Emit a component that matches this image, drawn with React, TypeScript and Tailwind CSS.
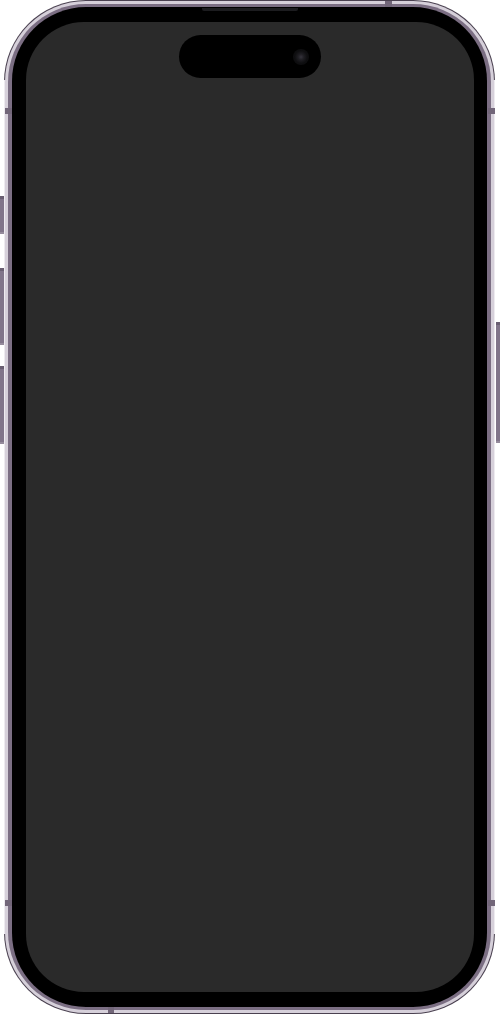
function SideButton({ className }: { className: string }) {
  return (
    <div className={`flex w-full flex-col justify-between bg-[#81758a] ${className}`}>
      <div className="h-[3px] bg-[#6a5f72]" />
      <div className="h-[2px] bg-[#958b9c]" />
    </div>
  );
}

function Band({ className }: { className: string }) {
  return <div className={`absolute bg-[#726679] ${className}`} />;
}

export default function App() {
  return (
    <div className="relative flex h-[1014px] w-[500px] overflow-hidden bg-white">
      {/* volume + mute buttons */}
      <div className="flex w-[4px] shrink-0 flex-col pt-[196px]">
        <SideButton className="h-[38px]" />
        <SideButton className="mt-[34px] h-[77px]" />
        <SideButton className="mt-[21px] h-[78px]" />
      </div>

      {/* phone body */}
      <div className="h-full w-[491px] shrink-0 rounded-[82px] bg-[linear-gradient(to_bottom,#4a4150_80px,#eeebf0_80px,#eeebf0_934px,#4a4150_934px)] p-[1px]">
        <div className="h-full rounded-[81px] bg-[#d6d0da] p-[3px]">
          <div className="h-full rounded-[78px] bg-[#7b6e83] px-[4px] py-[3px]">
            <div className="h-full rounded-[74px] bg-black pt-[15px] pr-[13px] pb-[15px] pl-[14px]">
              <div className="h-full rounded-[58px] bg-[#2a2a2a] pt-[13px]">
                <div className="flex justify-center">
                  <div className="flex h-[43px] w-[142px] items-center justify-end rounded-full bg-black pr-[12px]">
                    <div className="h-[16px] w-[16px] rounded-full bg-[radial-gradient(circle,#35333c_0,#1f1e23_25%,#0e0e10_55%,#0a0a0c_100%)]" />
                  </div>
                </div>
              </div>
            </div>
          </div>
        </div>
      </div>

      {/* power button */}
      <div className="flex w-[5px] shrink-0 flex-col pt-[322px] pl-[1px]">
        <SideButton className="h-[121px]" />
      </div>

      {/* speaker slit */}
      <div className="absolute top-[8px] left-[202px] h-[3px] w-[96px] rounded-b-[2px] bg-[#1c1c1f]" />

      {/* antenna bands */}
      <Band className="top-[108px] left-[5px] h-[6px] w-[7px]" />
      <Band className="top-[900px] left-[5px] h-[6px] w-[7px]" />
      <Band className="top-[108px] right-[5px] h-[6px] w-[7px]" />
      <Band className="top-[900px] right-[5px] h-[6px] w-[7px]" />
      <Band className="top-[1px] left-[385px] h-[6px] w-[7px]" />
      <Band className="bottom-[1px] left-[108px] h-[6px] w-[6px]" />
    </div>
  );
}
